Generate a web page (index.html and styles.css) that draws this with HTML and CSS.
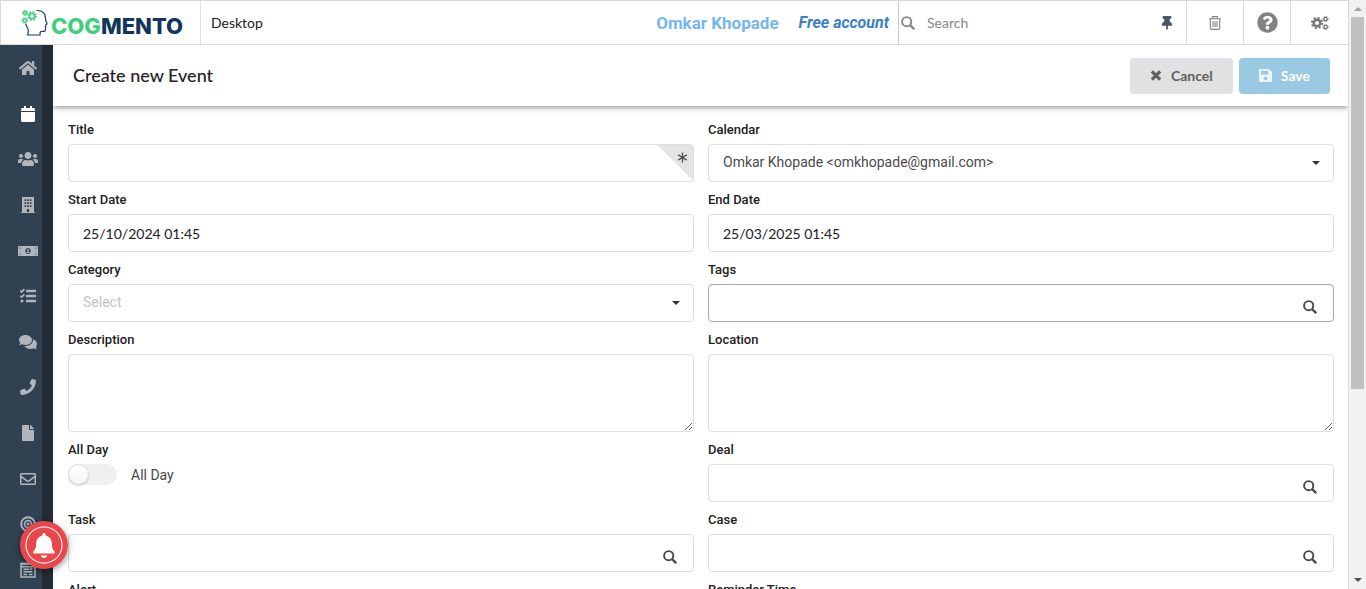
FILE: index.html
```html
<!DOCTYPE html>
<html lang="en">
<head>
<meta charset="utf-8">
<title>Create new Event</title>
<link rel="stylesheet" href="styles.css">
</head>
<body>
<svg class="sprite" aria-hidden="true">
  <symbol id="home" viewBox="0 0 576 512"><path d="M280.37 148.26L96 300.11V464a16 16 0 0 0 16 16l112.06-.29a16 16 0 0 0 15.92-16V368a16 16 0 0 1 16-16h64a16 16 0 0 1 16 16v95.64a16 16 0 0 0 16 16.05L464 480a16 16 0 0 0 16-16V300L295.67 148.26a12.19 12.19 0 0 0-15.3 0zM571.6 251.47L488 182.56V44.05a12 12 0 0 0-12-12h-56a12 12 0 0 0-12 12v72.61L318.47 43a48 48 0 0 0-61 0L4.34 251.47a12 12 0 0 0-1.6 16.9l25.5 31A12 12 0 0 0 45.15 301l235.22-193.74a12.19 12.19 0 0 1 15.3 0L530.9 301a12 12 0 0 0 16.9-1.6l25.5-31a12 12 0 0 0-1.7-16.93z"/></symbol>
  <symbol id="calendar-icon" viewBox="0 0 448 512"><path d="M12 192h424c6.6 0 12 5.4 12 12v260c0 26.5-21.5 48-48 48H48c-26.5 0-48-21.5-48-48V204c0-6.6 5.4-12 12-12zm436-44v-36c0-26.5-21.5-48-48-48h-48V12c0-6.6-5.4-12-12-12h-40c-6.6 0-12 5.4-12 12v52H160V12c0-6.6-5.4-12-12-12h-40c-6.6 0-12 5.4-12 12v52H48C21.5 64 0 85.5 0 112v36c0 6.6 5.4 12 12 12h424c6.6 0 12-5.4 12-12z"/></symbol>
  <symbol id="users" viewBox="0 0 640 512"><path d="M96 224c35.3 0 64-28.7 64-64s-28.7-64-64-64-64 28.7-64 64 28.7 64 64 64zm448 0c35.3 0 64-28.7 64-64s-28.7-64-64-64-64 28.7-64 64 28.7 64 64 64zm32 32h-64c-17.6 0-33.5 7.1-45.1 18.6 40.3 22.1 68.9 62 75.1 109.4h66c17.7 0 32-14.3 32-32v-32c0-35.3-28.7-64-64-64zm-256 0c61.9 0 112-50.1 112-112S381.9 32 320 32 208 82.1 208 144s50.1 112 112 112zm76.8 32h-8.3c-20.8 10-43.9 16-68.5 16s-47.6-6-68.5-16h-8.3C179.6 288 128 339.6 128 403.2V432c0 26.5 21.5 48 48 48h288c26.5 0 48-21.5 48-48v-28.8c0-63.6-51.6-115.2-115.2-115.2zm-223.7-13.4C161.5 263.1 145.6 256 128 256H64c-35.3 0-64 28.7-64 64v32c0 17.7 14.3 32 32 32h65.9c6.3-47.4 34.9-87.3 75.2-109.4z"/></symbol>
  <symbol id="building" viewBox="0 0 448 512"><path fill-rule="evenodd" d="M436 480h-20V24c0-13-11-24-24-24H56C43 0 32 11 32 24v456H12c-7 0-12 5-12 12v20h448v-20c0-7-5-12-12-12zM112 72h56v56h-56zM196 72h56v56h-56zM280 72h56v56h-56zM112 168h56v56h-56zM196 168h56v56h-56zM280 168h56v56h-56zM112 264h56v56h-56zM196 264h56v56h-56zM280 264h56v56h-56zM188 384h72v96h-72z"/></symbol>
  <symbol id="money" viewBox="0 0 640 512"><path fill-rule="evenodd" d="M0 96h640v320H0zM48 144v40a40 40 0 0 0 40-40zM592 144h-40a40 40 0 0 0 40 40zM48 368h40a40 40 0 0 0-40-40zM592 368v-40a40 40 0 0 0-40 40zM320 160c-49 0-88 43-88 96s39 96 88 96 88-43 88-96-39-96-88-96zM298 200h42v88h20v28h-80v-28h20v-52h-20v-24z"/></symbol>
  <symbol id="tasks" viewBox="0 0 512 512"><path d="M208 56h288a16 16 0 0 1 16 16v48a16 16 0 0 1-16 16H208a16 16 0 0 1-16-16V72a16 16 0 0 1 16-16zm0 160h288a16 16 0 0 1 16 16v48a16 16 0 0 1-16 16H208a16 16 0 0 1-16-16v-48a16 16 0 0 1 16-16zm0 160h288a16 16 0 0 1 16 16v48a16 16 0 0 1-16 16H208a16 16 0 0 1-16-16v-48a16 16 0 0 1 16-16z"/><circle cx="64" cy="416" r="48"/><path class="line" stroke-width="56" d="M10 86l42 40 90-88M10 250l42 40 90-88"/></symbol>
  <symbol id="comments" viewBox="0 0 576 512"><path d="M416 192c0-88.4-93.1-160-208-160S0 103.6 0 192c0 34.3 14.1 65.9 38 92-13.4 30.2-35.5 54.2-35.8 54.5-2.2 2.3-2.8 5.7-1.5 8.7S4.8 352 8 352c36.6 0 66.9-12.3 88.7-25 32.2 15.7 70.3 25 111.3 25 114.9 0 208-71.6 208-160zm122 220c23.9-26 38-57.7 38-92 0-66.9-53.5-124.2-129.3-148.1.9 6.6 1.3 13.3 1.3 20.1 0 105.9-107.7 192-240 192-10.8 0-21.3-.8-31.7-1.9C207.8 439.6 281.8 480 368 480c41 0 79.1-9.2 111.3-25 21.8 12.7 52.1 25 88.7 25 3.2 0 6.1-1.9 7.3-4.8 1.3-2.9.7-6.3-1.5-8.7-.3-.3-22.4-24.2-35.8-54.5z"/></symbol>
  <symbol id="phone" viewBox="0 0 512 512"><path d="M493.4 24.6l-104-24c-11.3-2.6-22.9 3.3-27.5 13.9l-48 112c-4.2 9.8-1.4 21.3 6.9 28l60.6 49.6c-36 76.7-98.9 140.5-177.2 177.2l-49.6-60.6c-6.8-8.3-18.2-11.1-28-6.900l-112 48C3.900 366.500-2 378.100.6 389.400l24 104C27.100 504.200 36.700 512 48 512c256.100 0 464-207.500 464-464 0-11.200-7.700-20.900-18.600-23.400z"/></symbol>
  <symbol id="file" viewBox="0 0 384 512"><path d="M224 136V0H24C10.7 0 0 10.7 0 24v464c0 13.3 10.7 24 24 24h336c13.3 0 24-10.7 24-24V160H248c-13.2 0-24-10.8-24-24zm160-14.1v6.1H256V0h6.1c6.4 0 12.5 2.5 17 7l97.9 98c4.5 4.5 7 10.6 7 16.9z"/></symbol>
  <symbol id="mail" viewBox="0 0 512 512"><path d="M464 64H48C21.49 64 0 85.49 0 112v288c0 26.51 21.49 48 48 48h416c26.51 0 48-21.49 48-48V112c0-26.51-21.49-48-48-48zm0 48v40.805c-22.422 18.259-58.168 46.651-134.587 106.49-16.841 13.247-50.201 45.072-73.413 44.701-23.208.375-56.579-31.459-73.413-44.701C106.18 199.465 70.425 171.067 48 152.805V112h416zM48 400V214.398c22.914 18.251 55.409 43.862 104.938 82.646 21.857 17.205 60.134 55.186 103.062 54.955 42.717.231 80.509-37.199 103.053-54.947 49.528-38.783 82.032-64.401 104.947-82.653V400H48z"/></symbol>
  <symbol id="target" viewBox="0 0 512 512"><circle class="line" cx="256" cy="256" r="218" stroke-width="60"/><circle class="line" cx="256" cy="256" r="112" stroke-width="52"/><circle cx="256" cy="256" r="46"/></symbol>
  <symbol id="form" viewBox="0 0 512 512"><path class="line" stroke-width="48" d="M32 40h448v440H32zM32 150h448M110 235h190M110 315h290M110 400h120M290 400h110M390 190l-60 60"/><path d="M32 40h448v56H32z"/></symbol>
  <symbol id="bell" viewBox="0 0 448 512"><path d="M224 512c35.32 0 63.97-28.65 63.97-50H160.03c0 21.35 28.65 50 63.97 50zm215.39-135c-19.32-20.76-55.47-51.99-55.47-169 0-77.7-54.48-139.9-127.94-155.16V32c0-17.67-14.32-32-31.98-32s-31.98 14.33-31.98 32v20.84C118.56 68.1 64.08 130.3 64.08 208c0 117-36.15 148.24-55.47 169C0 387-4 400 4 412c4 5 12 8 28 8h384c16 0 24-3 28-8 8-12 4-25-4.610-35z"/></symbol>
  <symbol id="search-icon" viewBox="0 0 14 14"><circle class="line" cx="5.700" cy="5.700" r="4.600" stroke-width="1.900"/><path class="line" stroke-width="2.400" d="M9 9l4.200 4.200"/></symbol>
  <symbol id="pin" viewBox="0 0 384 512"><path d="M298.028 214.267L285.793 96H328c13.255 0 24-10.745 24-24V24c0-13.255-10.745-24-24-24H56C42.745 0 32 10.745 32 24v48c0 13.255 10.745 24 24 24h42.207L85.972 214.267C37.465 236.82 0 277.261 0 328c0 13.255 10.745 24 24 24h136v104.007c0 1.242.289 2.467.845 3.578l24 48c2.941 5.882 11.364 5.893 14.311 0l24-48a8.008 8.008 0 0 0 .845-3.578V352h136c13.255 0 24-10.745 24-24-.001-51.183-37.983-91.42-85.973-113.733z"/></symbol>
  <symbol id="trash" viewBox="0 0 12 14"><path class="line" stroke-width="1.100" d="M0 2.800h12M3.700 2.500V.6h4.600v1.900M1.300 2.800v9.200q0 1.400 1.400 1.400h6.600q1.400 0 1.400-1.400V2.800M4 5.200v5.800M6 5.200v5.800M8 5.200v5.800"/></symbol>
  <symbol id="help" viewBox="0 0 512 512"><path d="M504 256c0 136.997-111.043 248-248 248S8 392.997 8 256C8 119.083 119.043 8 256 8s248 111.083 248 248zM262.655 90c-54.497 0-89.255 22.957-116.549 63.758-3.536 5.286-2.353 12.415 2.715 16.258l34.699 26.31c5.205 3.947 12.621 3.008 16.665-2.122 17.864-22.658 30.113-35.797 57.303-35.797 20.429 0 45.698 13.148 45.698 32.958 0 14.976-12.363 22.667-32.534 33.976C247.128 238.528 216 254.941 216 296v4c0 6.627 5.373 12 12 12h56c6.627 0 12-5.373 12-12v-1.333c0-28.462 83.186-29.647 83.186-106.667 0-58.002-60.165-102-116.531-102zM256 338c-25.365 0-46 20.635-46 46 0 25.364 20.635 46 46 46s46-20.636 46-46c0-25.365-20.635-46-46-46z"/></symbol>
  <symbol id="gears" viewBox="0 0 18 14"><circle class="line" cx="6" cy="7" r="3.300" stroke-width="2.400"/><circle class="line" cx="6" cy="7" r="5.200" stroke-width="1.800" stroke-dasharray="2.040 2.040"/><circle class="line" cx="14.500" cy="3" r="1.700" stroke-width="1.300"/><circle class="line" cx="14.500" cy="3" r="2.700" stroke-width=".8" stroke-dasharray="1.060 1.060"/><circle class="line" cx="14.500" cy="11" r="1.700" stroke-width="1.300"/><circle class="line" cx="14.500" cy="11" r="2.700" stroke-width=".8" stroke-dasharray="1.060 1.060"/></symbol>
  <symbol id="close" viewBox="0 0 12 12"><path class="line" stroke-width="3.600" d="M1.500 1.500l9 9M10.500 1.500l-9 9"/></symbol>
  <symbol id="save" viewBox="0 32 448 448"><path d="M433.941 129.941l-83.882-83.882A48 48 0 0 0 316.118 32H48C21.49 32 0 53.49 0 80v352c0 26.51 21.49 48 48 48h352c26.51 0 48-21.49 48-48V163.882a48 48 0 0 0-14.059-33.941zM224 416c-35.346 0-64-28.654-64-64 0-35.346 28.654-64 64-64s64 28.654 64 64c0 35.346-28.654 64-64 64zm96-304.520V212c0 6.627-5.373 12-12 12H76c-6.627 0-12-5.373-12-12V108c0-6.627 5.373-12 12-12h228.520c3.183 0 6.235 1.264 8.485 3.515l3.480 3.480A11.996 11.996 0 0 1 320 111.480z"/></symbol>
  <symbol id="asterisk" viewBox="0 0 12 12"><path class="line" stroke-width="1.500" d="M6 .5v11M1.200 3.200l9.600 5.600M10.800 3.200L1.200 8.800"/></symbol>
  <symbol id="caret" viewBox="0 0 8 4"><path d="M0 0h8L4 4z"/></symbol>
</svg>

<div class="window">
  <div class="app">
    <header class="topbar">
      <a class="brand" href="#" aria-label="Cogmento">
        <svg class="brand-mark" viewBox="0 0 28 28" aria-hidden="true">
          <path class="head" d="M15.500 1.500C22 1.200 24.600 5 24.500 9.500c0 1.500.3 2.500 1.300 4.200.6 1 .3 1.500-.8 1.900l-.2 1.200-.5.700.3.800c-.2 1.300.2 2.700-.7 3.600-1.300 1-3.400-.2-4.500 1-.5.700-.3 1.900-.3 3.100H6.700c.6-2.300 1.300-4.400.2-6.300-1-1.600-1.900-3.100-2.200-5"/>
          <g class="cogs"><circle cx="11" cy="7" r="2.600"/><circle class="teeth" cx="11" cy="7" r="4" stroke-dasharray="1.800 1.340"/><circle cx="4" cy="4" r="1.500"/><circle class="teeth small" cx="4" cy="4" r="2.500" stroke-dasharray="1.200 .76"/><circle cx="3.700" cy="11.500" r="1.700"/><circle class="teeth small" cx="3.700" cy="11.500" r="2.800" stroke-dasharray="1.300 .9"/></g>
        </svg>
        <span class="brand-name"><span class="brand-cog">COG</span>MENTO</span>
      </a>
      <span class="page-name">Desktop</span>
      <a class="user" href="#">Omkar Khopade</a>
      <a class="plan" href="#">Free account</a>
      <label class="search">
        <svg class="i14"><use href="#search-icon"/></svg>
        <input type="search" placeholder="Search" aria-label="Search">
      </label>
      <button class="tool pin" aria-label="Pin"><svg><use href="#pin"/></svg></button>
      <button class="tool trash" aria-label="Trash"><svg><use href="#trash"/></svg></button>
      <button class="tool help" aria-label="Help"><svg><use href="#help"/></svg></button>
      <button class="tool gears" aria-label="Settings"><svg><use href="#gears"/></svg></button>
    </header>

    <div class="body">
      <nav class="sidebar" aria-label="Main">
        <a href="#" aria-label="Home"><svg><use href="#home"/></svg></a>
        <a href="#" aria-label="Calendar" class="active"><svg><use href="#calendar-icon"/></svg></a>
        <a href="#" aria-label="Contacts"><svg class="wide"><use href="#users"/></svg></a>
        <a href="#" aria-label="Companies"><svg><use href="#building"/></svg></a>
        <a href="#" aria-label="Deals"><svg class="wide"><use href="#money"/></svg></a>
        <a href="#" aria-label="Tasks"><svg><use href="#tasks"/></svg></a>
        <a href="#" aria-label="Cases"><svg class="wide"><use href="#comments"/></svg></a>
        <a href="#" aria-label="Calls"><svg><use href="#phone"/></svg></a>
        <a href="#" aria-label="Documents"><svg><use href="#file"/></svg></a>
        <a href="#" aria-label="Email"><svg><use href="#mail"/></svg></a>
        <a href="#" aria-label="Campaigns"><svg><use href="#target"/></svg></a>
        <a href="#" aria-label="Forms"><svg><use href="#form"/></svg></a>
      </nav>

      <main class="main">
        <div class="page-head">
          <h1>Create new Event</h1>
          <button class="btn cancel"><svg><use href="#close"/></svg>Cancel</button>
          <button class="btn save"><svg><use href="#save"/></svg>Save</button>
        </div>
        <form class="form">
          <div class="field"><label for="title">Title</label>
            <div class="control"><input id="title" type="text" required><span class="corner"><svg><use href="#asterisk"/></svg></span></div></div>
          <div class="field"><label for="calendar">Calendar</label>
            <div class="control"><select id="calendar"><option>Omkar Khopade &lt;omkhopade@gmail.com&gt;</option></select><svg class="caret"><use href="#caret"/></svg></div></div>
          <div class="field"><label for="start">Start Date</label>
            <div class="control"><input id="start" type="text" value="25/10/2024 01:45"></div></div>
          <div class="field"><label for="end">End Date</label>
            <div class="control"><input id="end" type="text" value="25/03/2025 01:45"></div></div>
          <div class="field"><label for="category">Category</label>
            <div class="control"><select id="category" class="empty"><option>Select</option></select><svg class="caret"><use href="#caret"/></svg></div></div>
          <div class="field"><label for="tags">Tags</label>
            <div class="control"><input id="tags" class="hovered" type="text"><svg class="find"><use href="#search-icon"/></svg></div></div>
          <div class="field"><label for="description">Description</label><textarea id="description"></textarea></div>
          <div class="field"><label for="location">Location</label><textarea id="location"></textarea></div>
          <div class="field"><label for="allday">All Day</label>
            <label class="toggle"><input id="allday" type="checkbox"><span>All Day</span></label></div>
          <div class="field"><label for="deal">Deal</label>
            <div class="control"><input id="deal" type="text"><svg class="find"><use href="#search-icon"/></svg></div></div>
          <div class="field"><label for="task">Task</label>
            <div class="control"><input id="task" type="text"><svg class="find"><use href="#search-icon"/></svg></div></div>
          <div class="field"><label for="case">Case</label>
            <div class="control"><input id="case" type="text"><svg class="find"><use href="#search-icon"/></svg></div></div>
          <div class="field"><label for="alert">Alert</label>
            <div class="control"><input id="alert" type="text"></div></div>
          <div class="field"><label for="reminder">Reminder Time</label>
            <div class="control"><input id="reminder" type="text"></div></div>
        </form>
      </main>
    </div>
  </div>
  <div class="scrollbar" aria-hidden="true">
    <svg class="arrow up"><use href="#caret"/></svg>
    <div class="track"><div class="thumb"></div></div>
    <svg class="arrow"><use href="#caret"/></svg>
  </div>
</div>
<button class="notify" aria-label="Notifications"><svg><use href="#bell"/></svg></button>
</body>
</html>
```

FILE: styles.css
```css
* { box-sizing: border-box; }
html, body { height: 100%; }
body {
  margin: 0;
  overflow: hidden;
  font-family: Lato, "Liberation Sans", sans-serif;
  font-size: 14px;
  color: #212121;
  background: #fff;
}
a { text-decoration: none; color: inherit; }
svg { display: block; fill: currentColor; width: 16px; height: 16px; flex: none; }
.line { fill: none; stroke: currentColor; }
.sprite { position: absolute; width: 0; height: 0; }
button, input, select, textarea { font: inherit; color: inherit; margin: 0; }

.window { display: flex; height: 100vh; }
.app { flex: 1; min-width: 0; display: flex; flex-direction: column; }

/* Top bar */
.topbar {
  display: flex;
  align-items: stretch;
  flex: none;
  height: 45px;
  border: 1px solid #d9d9da;
  background: #fff;
  line-height: 44px;
}
.brand {
  display: flex;
  align-items: center;
  gap: 2px;
  width: 200px;
  padding-left: 20px;
  border-right: 1px solid #e0e0e1;
}
.brand-mark { width: 28px; height: 28px; }
.head { fill: none; stroke: #17395c; stroke-width: 1.2; }
.cogs circle { fill: none; stroke: #3fcf7f; stroke-width: 1.5; }
.cogs .small { stroke-width: 1; }
.brand-name {
  padding-top: 7px;
  font: 800 22px/38px Inter, sans-serif;
  color: #12355b;
}
.brand-cog { color: #3fcf7f; }
.page-name { flex: 1; padding-left: 10px; }
.user, .plan { font-family: Roboto, sans-serif; font-weight: 700; }
.user { font-size: 17px; color: #75b5f0; margin-right: 20px; }
.plan { font-size: 16px; font-style: italic; color: #3c80c2; margin-right: 9px; }
.search {
  display: flex;
  align-items: center;
  gap: 12px;
  width: 250px;
  padding-left: 2px;
  border-left: 1px solid #c8c8c9;
  color: #858585;
}
.i14 { width: 14px; height: 14px; }
.search input { flex: 1; min-width: 0; border: 0; padding: 0; background: none; outline: 0; }
.search input::placeholder { color: #868686; }
.tool {
  display: flex;
  align-items: center;
  justify-content: center;
  border: 0;
  border-right: 1px solid #dcdcdd;
  padding: 0;
  background: none;
  color: #828282;
}
.tool.pin { width: 39px; color: #4a5766; }
.pin svg { height: 14px; }
.tool.trash { width: 57px; }
.trash svg { width: 12px; height: 14px; }
.tool.help { width: 47px; }
.help svg { width: 21px; height: 21px; }
.tool.gears { width: 57px; border-right: 0; color: #747474; }
.gears svg { width: 18px; height: 14px; }

/* Sidebar */
.body { flex: 1; min-height: 0; display: flex; }
.sidebar {
  display: flex;
  flex-direction: column;
  justify-content: space-between;
  flex: none;
  width: 53px;
  padding: 11px 0 7px 13px;
  border-right: 11px solid #222c36;
  background: #304151;
  color: #b0b6bc;
}
.sidebar a { display: flex; align-items: center; justify-content: center; height: 24px; }
.sidebar svg { width: 18px; height: 16px; }
.sidebar .wide { width: 20px; }
.sidebar .active { color: #fff; }

/* Page header */
.main { flex: 1; min-width: 0; overflow: hidden; border-right: 1px solid #dcdcdd; }
.page-head {
  display: flex;
  align-items: center;
  gap: 6px;
  height: 61px;
  padding: 0 18px 0 20px;
  box-shadow: 0 1px 6px rgba(0, 0, 0, .5);
}
.page-head h1 { flex: 1; margin: 0; padding-bottom: 2px; font-size: 18px; font-weight: 500; line-height: 24px; }
.btn {
  display: flex;
  align-items: center;
  justify-content: center;
  gap: 9px;
  height: 36px;
  border: 0;
  border-radius: 4px;
  padding: 0 20px;
  font-weight: 700;
}
.btn svg { width: 12px; height: 11px; }
.cancel { background: #e0e1e2; color: #5f5f60; }
.save { background: #9acae3; color: #fff; }
.save svg { width: 13px; height: 13px; opacity: .8; }

/* Form */
.form {
  display: grid;
  grid-template-columns: 1fr 1fr;
  gap: 8px 14px;
  padding: 14px 14px 0 15px;
}
.field { display: flex; flex-direction: column; gap: 4px; min-width: 0; }
.field > label:first-child { font: 500 13px/20px Roboto, sans-serif; }
.control { position: relative; }
.control input, .control select, .field textarea {
  display: block;
  width: 100%;
  border: 1px solid #dededf;
  border-radius: 4px;
  background: #fff;
  outline: 0;
}
.control input { height: 38px; padding: 0 14px; }
.control select {
  height: 38px;
  padding: 0 14px 2px;
  appearance: none;
  font-family: Roboto, sans-serif;
  color: #4a4a4a;
}
.control .empty { color: #c3c3c3; }
.control .hovered { border-color: #a9a9aa; }
.field textarea { height: 78px; padding: 10px 14px; resize: vertical; }
.caret { position: absolute; right: 14px; top: 17px; width: 8px; height: 4px; color: #333; }
.find { position: absolute; right: 17px; top: 16px; width: 14px; height: 14px; color: #484848; }
.corner {
  position: absolute;
  top: 1px;
  right: 1px;
  width: 36px;
  height: 36px;
  padding: 7px 5px;
  border-radius: 0 3px 3px 0;
  background: linear-gradient(45deg, transparent 50%, #e4e4e5 50%);
  color: #555;
}
.corner svg { width: 11px; height: 11px; margin-left: auto; }
.toggle {
  display: flex;
  align-items: center;
  gap: 14px;
  height: 21px;
  font-family: Roboto, sans-serif;
  color: #484848;
}
.toggle input {
  appearance: none;
  width: 49px;
  height: 21px;
  border-radius: 11px;
  background: #f0f0f0;
}
.toggle input::before {
  content: "";
  display: block;
  width: 21px;
  height: 21px;
  border-radius: 50%;
  background: linear-gradient(#fff, #f5f5f5);
  box-shadow: 0 1px 2px rgba(0, 0, 0, .15), 0 0 0 1px rgba(34, 36, 38, .15) inset;
}

/* Page scrollbar */
.scrollbar {
  display: flex;
  flex-direction: column;
  align-items: center;
  flex: none;
  width: 17px;
  padding: 7px 0 7px;
  background: #f1f1f1;
}
.arrow { width: 8px; height: 4px; color: #505050; }
.up { transform: rotate(180deg); color: #a0a0a0; }
.track { flex: 1; width: 13px; padding: 6px 0; }
.thumb { height: 67%; background: #c1c1c1; }

.notify {
  position: fixed;
  left: 20px;
  bottom: 20px;
  display: flex;
  align-items: center;
  justify-content: center;
  width: 48px;
  height: 48px;
  border: 0;
  border-radius: 50%;
  padding: 0;
  background: radial-gradient(circle, #e8474b 17px, #fff 18px, #fff 18px, #e8474b 19px);
  color: #fff;
  box-shadow: 0 2px 6px rgba(0, 0, 0, .45);
}
.notify svg { width: 24px; height: 25px; }
```
